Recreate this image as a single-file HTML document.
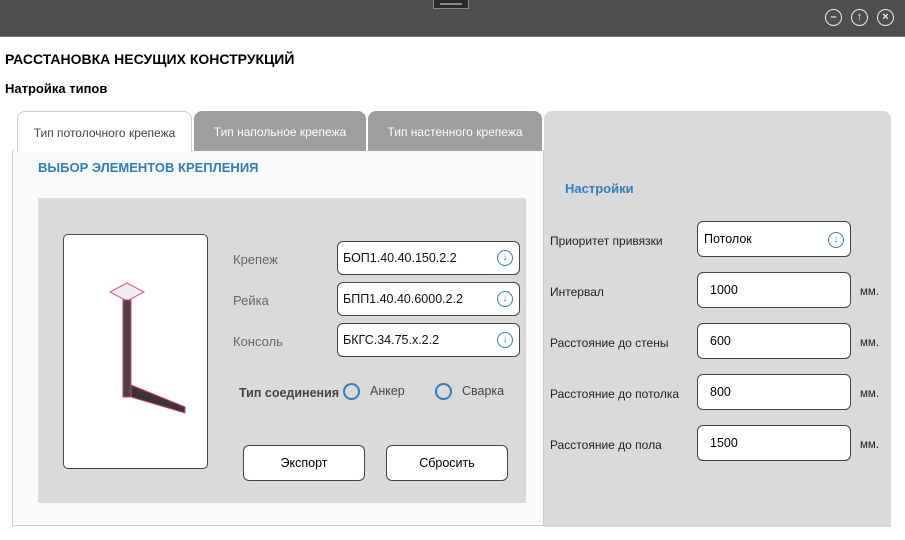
<!DOCTYPE html>
<html><head><meta charset="utf-8"><style>
*{box-sizing:border-box;margin:0;padding:0}
body{width:905px;height:540px;background:#fff;font-family:"Liberation Sans",sans-serif;position:relative;overflow:hidden}
.abs{position:absolute}
.bar{left:0;top:0;width:905px;height:37px;background:#4e4e4e;border-bottom:1px solid #777}
.ic{width:17px;height:17px;border:1.5px solid #eee;border-radius:50%;top:9px;color:#eee;font-size:11px;text-align:center;line-height:14px;font-weight:bold}
.tab{top:111px;height:40px;border-radius:8px 8px 0 0;font-size:12px;color:#fff;text-align:center;line-height:42px;background:#9e9e9e}
.inp{width:183px;height:34px;border:1.5px solid #444;border-radius:6px;background:#fff;font-size:12.5px;padding-left:5px;display:flex;align-items:center;color:#111}
.arr{position:absolute;right:6px;top:8px;width:16px;height:16px;border:1.5px solid #2f7fc0;border-radius:50%;color:#2f7fc0;font-size:10px;line-height:13px;text-align:center;font-weight:bold}
.lbl{font-size:13px;color:#666}
.rl{font-size:12px;color:#222}
.ri{width:154px;height:36px;border:1.5px solid #444;border-radius:6px;background:#fff;font-size:12.5px;padding-left:12px;display:flex;align-items:center}
.mm{font-size:11.5px;color:#222}
.btn{width:122px;height:36px;border:1.5px solid #444;border-radius:6px;background:#fff;font-size:12.5px;display:flex;align-items:center;justify-content:center}
.rad{width:17px;height:17px;border:2px solid #2f7fc0;border-radius:50%}
</style></head><body>
<div class="abs bar"></div>
<div class="abs" style="left:433px;top:0;width:36px;height:9px;background:#2a2a2a;border:1px solid #888;border-top:none"></div>
<div class="abs" style="left:440px;top:3px;width:22px;height:2px;background:#888"></div>
<div class="abs ic" style="left:825px">&#8211;</div>
<div class="abs ic" style="left:851px">&#8593;</div>
<div class="abs ic" style="left:877px">&#215;</div>
<div class="abs" style="left:5px;top:51px;font-size:14px;font-weight:bold">РАССТАНОВКА НЕСУЩИХ КОНСТРУКЦИЙ</div>
<div class="abs" style="left:5px;top:81px;font-size:13px;font-weight:bold">Натройка типов</div>
<div class="abs" style="left:544px;top:111px;width:347px;height:416px;background:#dadada;border-radius:8px 8px 0 0"></div>
<div class="abs" style="left:12px;top:150px;width:532px;height:376px;background:#fafafa;border:1px solid #ccc;border-top:none"></div>
<div class="abs tab" style="left:17px;width:175px;background:#fff;color:#444;border:1px solid #ccc;border-bottom:none;height:41px">Тип потолочного крепежа</div>
<div class="abs tab" style="left:194px;width:172px">Тип напольное крепежа</div>
<div class="abs tab" style="left:368px;width:174px">Тип настенного крепежа</div>
<div class="abs" style="left:38px;top:160px;font-size:13px;font-weight:bold;color:#2f7fc0">ВЫБОР ЭЛЕМЕНТОВ КРЕПЛЕНИЯ</div>
<div class="abs" style="left:38px;top:198px;width:488px;height:305px;background:#dadada"></div>
<div class="abs" style="left:63px;top:234px;width:145px;height:235px;background:#fff;border:1.5px solid #444;border-radius:5px"></div>
<svg class="abs" style="left:100px;top:275px" width="90" height="150">
<polygon points="10,17 27,8 44,17 27,26" fill="#eceef2" stroke="#e05a90" stroke-width="1"/>
<rect x="23" y="25" width="8" height="97" fill="#4a4248" stroke="#d04070" stroke-width="1"/>
<polygon points="31,110 85,132 85,138 31,122" fill="#3a3438" stroke="#d04070" stroke-width="1"/>
</svg>
<div class="abs lbl" style="left:233px;top:252px">Крепеж</div>
<div class="abs lbl" style="left:233px;top:293px">Рейка</div>
<div class="abs lbl" style="left:233px;top:334px">Консоль</div>
<div class="abs inp" style="left:337px;top:241px">БОП1.40.40.150.2.2<span class="arr">&#8595;</span></div>
<div class="abs inp" style="left:337px;top:282px">БПП1.40.40.6000.2.2<span class="arr">&#8595;</span></div>
<div class="abs inp" style="left:337px;top:323px">БКГС.34.75.x.2.2<span class="arr">&#8595;</span></div>
<div class="abs" style="left:239px;top:386px;font-size:12.5px;font-weight:bold;color:#444">Тип соединения</div>
<div class="abs rad" style="left:343px;top:383px"></div>
<div class="abs" style="left:370px;top:384px;font-size:12.5px;color:#444">Анкер</div>
<div class="abs rad" style="left:435px;top:383px"></div>
<div class="abs" style="left:462px;top:384px;font-size:12.5px;color:#444">Сварка</div>
<div class="abs btn" style="left:243px;top:445px">Экспорт</div>
<div class="abs btn" style="left:386px;top:445px">Сбросить</div>
<div class="abs" style="left:565px;top:181px;font-size:13px;font-weight:bold;color:#2f7fc0">Настройки</div>
<div class="abs rl" style="left:550px;top:234px">Приоритет привязки</div>
<div class="abs ri" style="left:697px;top:221px;padding-left:6px">Потолок<span class="arr" style="top:10px">&#8595;</span></div>
<div class="abs rl" style="left:550px;top:285px">Интервал</div>
<div class="abs ri" style="left:697px;top:272px">1000</div><div class="abs mm" style="left:860px;top:286px">мм.</div>
<div class="abs rl" style="left:550px;top:336px">Расстояние до стены</div>
<div class="abs ri" style="left:697px;top:323px">600</div><div class="abs mm" style="left:860px;top:337px">мм.</div>
<div class="abs rl" style="left:550px;top:387px">Расстояние до потолка</div>
<div class="abs ri" style="left:697px;top:374px">800</div><div class="abs mm" style="left:860px;top:388px">мм.</div>
<div class="abs rl" style="left:550px;top:438px">Расстояние до пола</div>
<div class="abs ri" style="left:697px;top:425px">1500</div><div class="abs mm" style="left:860px;top:439px">мм.</div>
</body></html>
